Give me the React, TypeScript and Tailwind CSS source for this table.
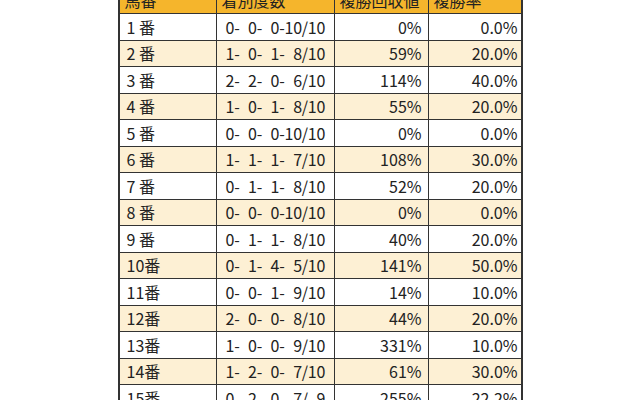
import React from 'react';

type Row = [string, string, string, string];

// figure space keeps the tallies lined up like fixed-width digits
const f = (s: string) => s.replace(/ /g, '\u2007');

const rows: Row[] = [
  ['1 番', '0- 0- 0-10/10', '0%', '0.0%'],
  ['2 番', '1- 0- 1- 8/10', '59%', '20.0%'],
  ['3 番', '2- 2- 0- 6/10', '114%', '40.0%'],
  ['4 番', '1- 0- 1- 8/10', '55%', '20.0%'],
  ['5 番', '0- 0- 0-10/10', '0%', '0.0%'],
  ['6 番', '1- 1- 1- 7/10', '108%', '30.0%'],
  ['7 番', '0- 1- 1- 8/10', '52%', '20.0%'],
  ['8 番', '0- 0- 0-10/10', '0%', '0.0%'],
  ['9 番', '0- 1- 1- 8/10', '40%', '20.0%'],
  ['10番', '0- 1- 4- 5/10', '141%', '50.0%'],
  ['11番', '0- 0- 1- 9/10', '14%', '10.0%'],
  ['12番', '2- 0- 0- 8/10', '44%', '20.0%'],
  ['13番', '1- 0- 0- 9/10', '331%', '10.0%'],
  ['14番', '1- 2- 0- 7/10', '61%', '30.0%'],
  ['15番', '0- 2- 0- 7/ 9', '255%', '22.2%'],
];

const cols = 'grid grid-cols-[97px_118px_94px_94px]';

export default function App() {
  return (
    <div className="w-[640px] h-[400px] overflow-hidden bg-white text-[#222] font-['Noto_Sans_CJK_JP','Noto_Sans',sans-serif] text-[16px]">
      <div className="w-[405px] mx-auto -mt-[13px] border-x-2 border-[#333]">
        {/* Header */}
        <div className={`${cols} h-[27px] bg-[#f5b52c] border-b border-[#333]`}>
          {['馬番', '着別度数', '複勝回収値', '複勝率'].map((h, i) => (
            <div
              key={h}
              className={`flex items-center px-[5px] leading-none ${i < 3 ? 'border-r border-[#333]' : ''}`}
            >
              {h}
            </div>
          ))}
        </div>

        {/* Body */}
        {rows.map((r, idx) => (
          <div
            key={r[0]}
            className={`${cols} h-[26.5px] border-b border-[#333] ${idx % 2 === 1 ? 'bg-[#fdf0d4]' : 'bg-white'}`}
          >
            <div className="flex items-center pl-[7px] border-r border-[#333] leading-none">{r[0]}</div>
            <div className="flex items-center pl-[9px] border-r border-[#333] leading-none whitespace-pre tracking-[-0.25px]">{f(r[1])}</div>
            <div className="flex items-center justify-end pr-[6px] border-r border-[#333] leading-none">{r[2]}</div>
            <div className="flex items-center justify-end pr-[5px] leading-none">{r[3]}</div>
          </div>
        ))}
      </div>
    </div>
  );
}
